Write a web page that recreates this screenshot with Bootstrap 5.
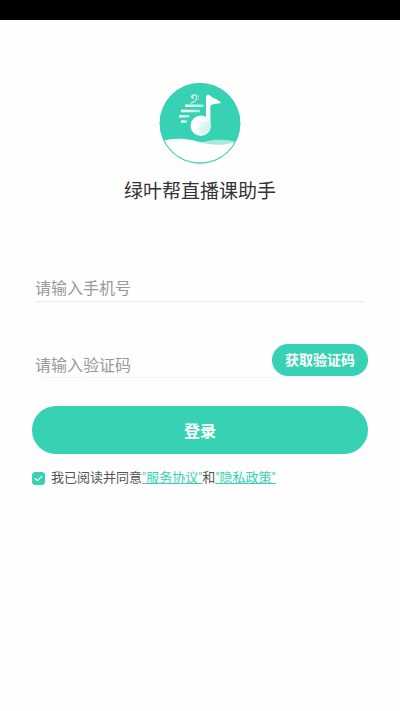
<!DOCTYPE html>
<html lang="zh-CN">
<head>
<meta charset="utf-8">
<meta name="viewport" content="width=device-width, initial-scale=1">
<title>绿叶帮直播课助手</title>
<link href="https://cdn.jsdelivr.net/npm/bootstrap@5.3.0/dist/css/bootstrap.min.css" rel="stylesheet">
<style>
  :root { --brand: #37d1b3; }
  body { font-family: "Noto Sans CJK SC", sans-serif; background: #fefefe; }
  .status-strip { height: 20px; background: #000; }
  .login-page { padding: 62px 32px 32px; }
  .app-logo { width: 82px; height: 82px; }
  .app-title { font-size: 19px; line-height: 28px; margin: 12px 0 68px; color: #333; }
  .line-field { margin: 0 3px; border-bottom: 1px solid #ececec; }
  .line-field .form-control { height: 29px; padding: 0; font-size: 16px; line-height: 24px; color: #333; }
  .line-field .form-control::placeholder { color: #999; }
  .line-field .form-control:focus { box-shadow: none; }
  .code-row { margin-top: 42px; }
  .code-row .line-field { margin-top: 4px; border-color: #f5f5f5; }
  .code-row .line-field .form-control { padding-top: 2px; }
  .btn-brand, .btn-brand:hover { background: var(--brand); color: #fff; border: 0; font-weight: 700; }
  .btn-code { height: 32px; padding: 0 13px; font-family: Roboto, "Noto Sans CJK SC", sans-serif; font-size: 14px; line-height: 32px; margin-left: -99px; z-index: 1; }
  .btn-login { height: 48px; font-size: 16px; line-height: 48px; margin-top: 28px; padding: 0; }
  .agree { margin-top: 14px; font-family: Roboto, "Noto Sans CJK SC", sans-serif; font-size: 13px; line-height: 20px; color: #555; }
  .agree .form-check-input { width: 13px; height: 13px; margin: 0 6px 0 0; border-radius: 3px; }
  .agree .form-check-input:checked {
    background-color: var(--brand); border-color: var(--brand);
    background-image: url("data:image/svg+xml,%3csvg xmlns='http://www.w3.org/2000/svg' viewBox='0 0 20 20'%3e%3cpath fill='none' stroke='%23fff' stroke-width='2' stroke-linecap='round' stroke-linejoin='round' d='M4 10l4 4 8-8'/%3e%3c/svg%3e");
  }
  .agree a { color: var(--brand); }
</style>
<script src="https://cdn.jsdelivr.net/npm/bootstrap@5.3.0/dist/js/bootstrap.bundle.min.js"></script>
</head>
<body>
<div class="status-strip"></div>
<main class="login-page">
  <div class="text-center">
    <svg class="app-logo d-block mx-auto" viewBox="0 0 82 82" aria-hidden="true">
      <defs>
        <linearGradient id="fade" x1="0" x2="1"><stop offset="0" stop-color="#fff"/><stop offset="1" stop-color="#a9ecdd"/></linearGradient>
        <linearGradient id="head" x1="0" y1="0" x2="1" y2=".6"><stop offset=".5" stop-color="#fff"/><stop offset="1" stop-color="#dcf8f2"/></linearGradient>
        <clipPath id="disc"><circle cx="41" cy="41.3" r="39.8"/></clipPath>
      </defs>
      <circle cx="41" cy="41.3" r="40.3" fill="#37d1b3"/>
      <g clip-path="url(#disc)">
        <path d="M40 61C48 59 53 57.5 60 57.7C67 57.8 72 58.5 82 60V66H40Z" fill="#a5ebdb"/>
        <path d="M0 60.5C7 57 17 56.2 25 57C36 58 42 61 51 62.3C60 63.5 67 62.5 82 59.5V82H0Z" fill="#fff"/>
      </g>
      <circle cx="41" cy="41.3" r="39.8" fill="none" stroke="#37d1b3"/>
      <g fill="url(#fade)">
        <rect x="26" y="22.5" width="18.5" height="2.6" rx=".5"/>
        <rect x="22" y="27.8" width="19" height="2.4" rx=".5"/>
        <rect x="20" y="33.1" width="10.5" height="2.4" rx=".5"/>
        <rect x="22" y="38.3" width="6" height="2.4" rx=".5"/>
      </g>
      <path d="M47 15C47 12.6 49.8 12 51 13.4C53.6 16.6 59 16.5 62 21C59 22 55 21.3 51.4 23.4V44H47Z" fill="#fff"/>
      <circle cx="41.8" cy="43.8" r="10.2" fill="url(#head)"/>
      <path d="M39.4 46C40 40 45 38.2 51.5 40.5C52.5 46 49 50 44.5 52C40.5 51 39 49 39.4 46Z" fill="#b9efe3" opacity=".4"/>
      <path d="M32.6 15.2C32.8 12 38 12 37.7 15.5C37.5 18.5 35 20 32 20.8" fill="none" stroke="#d9f7f0" stroke-width="1.2" stroke-linecap="round"/>
      <circle cx="33.7" cy="15.5" r="1.2" fill="#d9f7f0"/>
      <circle cx="39.5" cy="14.2" r=".6" fill="#d9f7f0"/>
      <circle cx="39.5" cy="17" r=".6" fill="#d9f7f0"/>
    </svg>
    <h1 class="app-title fw-normal">绿叶帮直播课助手</h1>
  </div>
  <form>
    <div class="line-field">
      <input class="form-control border-0 rounded-0 bg-transparent" type="tel" placeholder="请输入手机号" aria-label="手机号">
    </div>
    <div class="code-row d-flex align-items-start">
      <div class="line-field flex-grow-1">
        <input class="form-control border-0 rounded-0 bg-transparent" type="text" placeholder="请输入验证码" aria-label="验证码">
      </div>
      <button type="button" class="btn btn-brand btn-code rounded-pill flex-shrink-0 position-relative">获取验证码</button>
    </div>
    <button type="submit" class="btn btn-brand btn-login rounded-pill w-100">登录</button>
    <div class="agree d-flex align-items-center">
      <input class="form-check-input flex-shrink-0" type="checkbox" id="agree" checked>
      <label for="agree">我已阅读并同意<a href="#service">"服务协议"</a>和<a href="#privacy">"隐私政策"</a></label>
    </div>
  </form>
</main>
</body>
</html>
